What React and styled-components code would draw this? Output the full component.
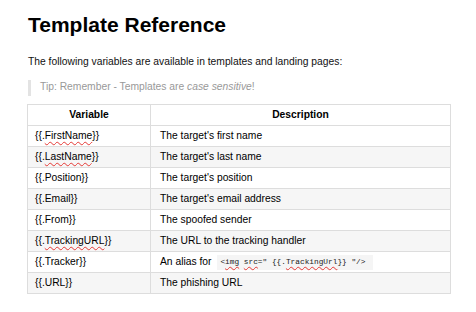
import React from "react";
import styled, { createGlobalStyle } from "styled-components";

const Global = createGlobalStyle`
  html, body { margin: 0; padding: 0; background: #fff; }
  body { font-family: "Liberation Sans", Arial, sans-serif; color: #000; }
`;

const Page = styled.div`
  padding: 13px 25px 0 27px;
  width: 424px;
`;

const Title = styled.h1`
  margin: 0 0 17px 1px;
  font-size: 21px;
  line-height: 24px;
  font-weight: bold;
`;

const Para = styled.p`
  margin: 0 0 11px 1px;
  font-size: 10.3px;
  line-height: 15px;
  color: #111;
`;

const Tip = styled.blockquote`
  margin: 0 0 8px 1px;
  padding: 0 0 2px 9px;
  border-left: 3px solid #e3e3e3;
  font-size: 10.3px;
  line-height: 14px;
  color: #999;
`;

const Table = styled.table`
  width: 424px;
  border-collapse: collapse;
  font-size: 10.3px;
  line-height: 14px;
`;

const Row = styled.tr`
  background: ${(p) => (p.$alt ? "#f6f6f6" : "#fff")};
`;

const Th = styled.th`
  border: 1px solid #dddddd;
  padding: 3px 8px;
  height: 14px;
  font-weight: bold;
  text-align: center;
  width: ${(p) => p.$w || "auto"};
`;

const Td = styled.td`
  border: 1px solid #dddddd;
  padding: 3px 8px 3px ${(p) => (p.$desc ? "9px" : "7px")};
  height: 14px;
  text-align: left;
  white-space: nowrap;
`;

const Typo = styled.span`
  text-decoration: underline wavy #e53935;
  text-decoration-thickness: 1px;
  text-underline-offset: 2px;
  text-decoration-skip-ink: none;
`;

const Code = styled.code`
  font-family: "Liberation Mono", "Courier New", monospace;
  font-size: 7.8px;
  line-height: 13px;
  display: inline-block;
  vertical-align: middle;
  background: #f5f5f5;
  padding: 1px 8px 1px 3px;
  margin: -2px 0 -2px 3px;
  color: #222;
`;

const rows = [
  [<>{"{{."}<Typo>FirstName</Typo>{"}}"}</>, "The target's first name"],
  [<>{"{{."}<Typo>LastName</Typo>{"}}"}</>, "The target's last name"],
  ["{{.Position}}", "The target's position"],
  ["{{.Email}}", "The target's email address"],
  ["{{.From}}", "The spoofed sender"],
  [<>{"{{."}<Typo>TrackingURL</Typo>{"}}"}</>, "The URL to the tracking handler"],
  [
    "{{.Tracker}}",
    <>
      An alias for{" "}
      <Code>
        {"<"}
        <Typo>img</Typo> <Typo>src</Typo>
        {'=" {{.'}
        <Typo>TrackingUrl</Typo>
        {'}} "/>'}
      </Code>
    </>,
  ],
  ["{{.URL}}", "The phishing URL"],
];

export default function App() {
  return (
    <>
      <Global />
      <Page>
        <Title>Template Reference</Title>
        <Para>The following variables are available in templates and landing pages:</Para>
        <Tip>
          Tip: Remember - Templates are <em>case sensitive</em>!
        </Tip>
        <Table>
          <thead>
            <Row>
              <Th $w="106px">Variable</Th>
              <Th>Description</Th>
            </Row>
          </thead>
          <tbody>
            {rows.map((r, i) => (
              <Row key={i} $alt={i % 2 === 1}>
                <Td>{r[0]}</Td>
                <Td $desc>{r[1]}</Td>
              </Row>
            ))}
          </tbody>
        </Table>
      </Page>
    </>
  );
}
